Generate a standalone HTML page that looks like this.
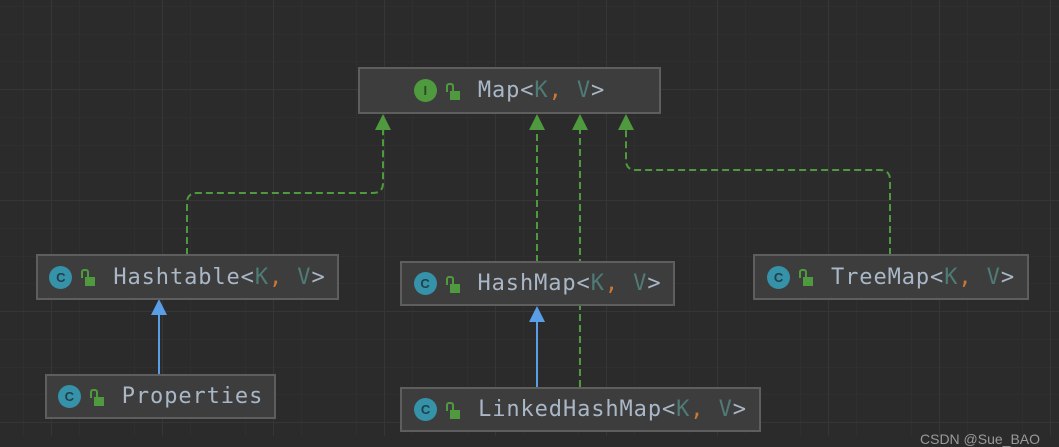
<!DOCTYPE html>
<html><head><meta charset="utf-8"><style>
html,body{margin:0;padding:0;}
body{width:1059px;height:436px;overflow:hidden;background:#2b2b2b;position:relative;font-family:"DejaVu Sans Mono","Liberation Mono",monospace;}
svg{position:absolute;left:0;top:0;}
.box{position:absolute;background:#3d3d3d;border:2px solid #5e5e5e;box-sizing:border-box;display:flex;align-items:center;justify-content:center;color:#a9b7c6;font-size:22px;letter-spacing:0.9px;white-space:nowrap;}
.k{color:#4f7a76}.c{color:#cc7832}
.ic{display:inline-block;width:23px;height:23px;border-radius:50%;background:#3592a9;color:#1f3f4a;font-size:13px;font-weight:bold;text-align:center;line-height:23px;margin-right:9px;letter-spacing:0;font-family:"Liberation Sans",sans-serif;}
.ii{background:#4f9a3e;color:#2b4a22;}
.lk{display:inline-block;width:14px;height:18px;position:relative;margin-right:18px;}
.lk:before{content:"";position:absolute;left:4px;bottom:0;width:10px;height:9px;background:#4f9a3e;}
.lk:after{content:"";position:absolute;left:0;top:1px;width:4px;height:7px;border:2px solid #4f9a3e;border-bottom:none;border-radius:3px 3px 0 0;}
.wm{position:absolute;left:920px;top:431px;color:#9a9a9a;font-family:"Liberation Sans",sans-serif;font-size:14px;}
</style></head><body>
<svg width="1059" height="436">
<g stroke="#2f2f2f" stroke-width="1">
<path d="M23.5 0V436M79.5 0V436M134.5 0V436M190.5 0V436M245.5 0V436M301.5 0V436M356.5 0V436M412.5 0V436M467.5 0V436M523.5 0V436M578.5 0V436M634.5 0V436M689.5 0V436M745.5 0V436M800.5 0V436M856.5 0V436M911.5 0V436M967.5 0V436M1022.5 0V436"/>
<path d="M0 6.5H1059M0 34.5H1059M0 61.5H1059M0 117.5H1059M0 145.5H1059M0 172.5H1059M0 228.5H1059M0 256.5H1059M0 283.5H1059M0 339.5H1059M0 367.5H1059M0 394.5H1059"/>
</g>
<g stroke="#363636" stroke-width="1">
<path d="M51.5 0V436M162.5 0V436M273.5 0V436M384.5 0V436M495.5 0V436M606.5 0V436M717.5 0V436M828.5 0V436M939.5 0V436M1050.5 0V436"/>
<path d="M0 89.5H1059M0 200.5H1059M0 311.5H1059M0 422.5H1059"/>
</g>
<g stroke="#4f9a3e" stroke-width="2" fill="none" stroke-dasharray="7,4">
<path d="M187 255V203Q187 193 197 193H373Q383 193 383 183V128"/>
<path d="M537 262V128"/>
<path d="M580 387V128"/>
<path d="M890 255V180Q890 170 880 170H636Q626 170 626 160V128"/>
</g>
<g fill="#4f9a3e">
<path d="M383 114L375 130H391Z"/>
<path d="M537 114L529 130H545Z"/>
<path d="M580 114L572 130H588Z"/>
<path d="M626 114L618 130H634Z"/>
</g>
<g stroke="#5a9ee8" stroke-width="2"><path d="M159 374V312"/><path d="M537 387V320"/></g>
<g fill="#5a9ee8"><path d="M159 299L151 315H167Z"/><path d="M537 306L529 322H545Z"/></g>
</svg>
<div class="box" style="left:358px;top:67px;width:303px;height:47px;"><span class="ic ii">I</span><span class="lk"></span>Map&lt;<span class="k">K</span><span class="c">,</span>&nbsp;<span class="k">V</span>&gt;</div>
<div class="box" style="left:36px;top:254px;width:303px;height:46px;"><span class="ic">C</span><span class="lk"></span>Hashtable&lt;<span class="k">K</span><span class="c">,</span>&nbsp;<span class="k">V</span>&gt;</div>
<div class="box" style="left:45px;top:374px;width:231px;height:45px;"><span class="ic">C</span><span class="lk"></span>Properties</div>
<div class="box" style="left:400px;top:261px;width:275px;height:45px;"><span class="ic">C</span><span class="lk"></span>HashMap&lt;<span class="k">K</span><span class="c">,</span>&nbsp;<span class="k">V</span>&gt;</div>
<div class="box" style="left:400px;top:387px;width:361px;height:45px;"><span class="ic">C</span><span class="lk"></span>LinkedHashMap&lt;<span class="k">K</span><span class="c">,</span>&nbsp;<span class="k">V</span>&gt;</div>
<div class="box" style="left:753px;top:254px;width:276px;height:46px;"><span class="ic">C</span><span class="lk"></span>TreeMap&lt;<span class="k">K</span><span class="c">,</span>&nbsp;<span class="k">V</span>&gt;</div>
<div class="wm">CSDN @Sue_BAO</div>
</body></html>
